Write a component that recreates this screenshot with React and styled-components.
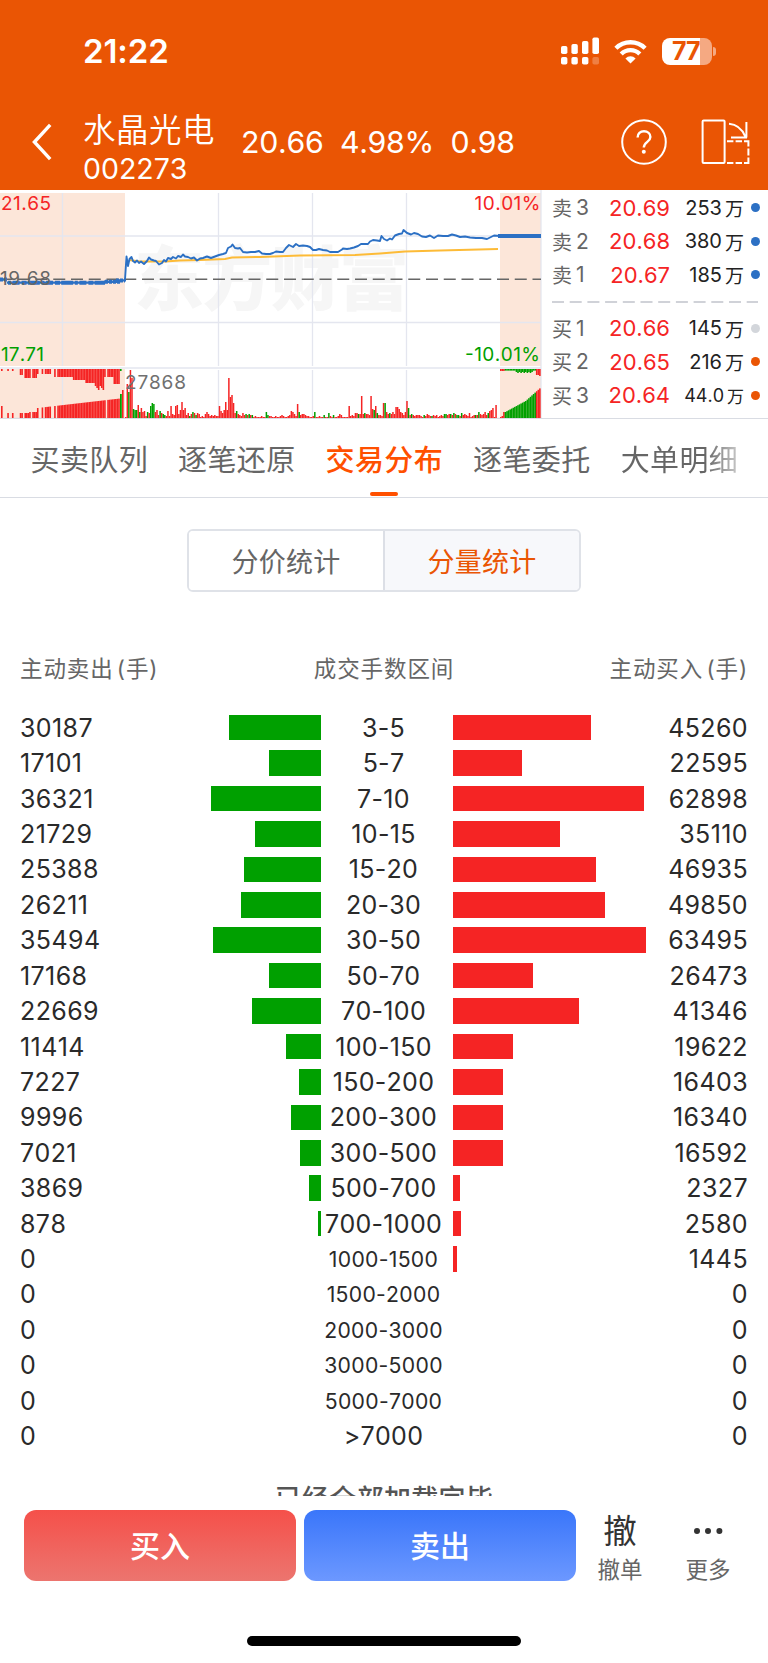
import React, { useState } from 'react';
import styled, { createGlobalStyle, css } from 'styled-components';

const RED   = '#f52424';
const GREEN = '#00a000';
const BLUE  = '#2c70c4';
const BRAND = '#ea5504';
const GRAY  = '#666666';

/* ---------- data ---------- */

const asks = [
  { label: '卖', level: 3, price: '20.69', volume: '253',  dot: BLUE },
  { label: '卖', level: 2, price: '20.68', volume: '380',  dot: BLUE },
  { label: '卖', level: 1, price: '20.67', volume: '185',  dot: BLUE },
];

const bids = [
  { label: '买', level: 1, price: '20.66', volume: '145',  dot: '#d3d6db' },
  { label: '买', level: 2, price: '20.65', volume: '216',  dot: BRAND },
  { label: '买', level: 3, price: '20.64', volume: '44.0', dot: BRAND, small: true },
];

const tabs = ['买卖队列', '逐笔还原', '交易分布', '逐笔委托', '大单明细'];

// [sell, range, buy]
const ranges = [
  [30187, '3-5',       45260],
  [17101, '5-7',       22595],
  [36321, '7-10',      62898],
  [21729, '10-15',     35110],
  [25388, '15-20',     46935],
  [26211, '20-30',     49850],
  [35494, '30-50',     63495],
  [17168, '50-70',     26473],
  [22669, '70-100',    41346],
  [11414, '100-150',   19622],
  [7227,  '150-200',   16403],
  [9996,  '200-300',   16340],
  [7021,  '300-500',   16592],
  [3869,  '500-700',   2327],
  [878,   '700-1000',  2580],
  [0,     '1000-1500', 1445],
  [0,     '1500-2000', 0],
  [0,     '2000-3000', 0],
  [0,     '3000-5000', 0],
  [0,     '5000-7000', 0],
  [0,     '>7000',     0],
];

const MAX_BAR    = 193;
const MAX_VOLUME = 63495;
const barWidth   = (value) => (value / MAX_VOLUME) * MAX_BAR;

const pricePoints = `125,89.5 126.5,66.5 128,76 129.5,69 131.5,67 133,71 135,72.5 137,70.5 139,73 141,71.5 144,74
147,71 149,67.5 151,69.5 154,70.5 156,71 159,74.5 162,73 164,70 166,71.5 168,68 171,69 173,67 176,68.5 178,66
181,67 183,64.5 185,66.5 188,67 191,68.5 194,67.5 197,70.5 200,68.5 203,68 207,66.5 211,68 215,66.5 219,65
223,64 226,63 228,58 231,56.5 232.5,54.5 235,58 238,58.5 240,58 243,62 247,62.5 251,62 255,62 259,61 262,63.5
266,64 270,64 273,63 276,61.5 280,62 283,62 286,58 289,55 293,57 296,54 299,56 303,55.5 307,56 310,57 313,60
316,60 319,59 323,60 327,60.5 330,62 334,62 338,62 342,59.5 343,58.5 347,59 350,58.5 354,57.5 358,56 361,54
364,54 368,54 370,51.5 373,50 377,50.5 380,51 381.5,46 384,49 387,50.5 390,48.5 392,49.5 395,45.5 399,44
402,43.5 403.5,40 407,43 411,44.5 414,43 418,44 422,46.5 426,47 430,45.5 434,48 438,45.5 443,46 448,46
452,44.5 456,45.5 460,47 465,46.5 470,47.5 476,48 482,48 487,49 491,47 494,45.5 500,46`;

const averagePoints = `129,70 140,71.5 165,71.5 180,70.5 200,70 225,69 232,67.5 260,67 300,65.5 355,65 380,63.5
405,61.5 440,60.5 498,59`;

// one entry per minute, negative = falling (green)
const minuteVolumes = [
  0, 34, -26, 48, 40, -9, -8, -8, 13, -6, 10, 6, 7, 2, -6, 5,
  -12, -15, -14, 6, 8, 3, -7, 5, -4, -3, 2, 7, 2,
  12, 4, 3, 12, 13, 4, 8, 16, 8, 10, 3, 5, -2, 4, -6, 5, -3, 5, 4, 0, 2,
  1, 4, 6, 4, 2, 3, 2, 3, 2, 2, 12, 7, 5, 8, 16, 8, 40, 21, 23, 15, 5,
  -7, 4, 3, 2, 5, 3, -4, 3, -4, 3, -3, 0, 2, 1, 0, 1, 2, 0, 1, -6,
  -3, 2, 2, 1, 0, 2, 1, 0, 2, 3, 2, 1, 0, 2, 3, 7, 6, 4, 2,
  14, -6, 3, 4, 4, 3, 2, 2, 1, 0, 2, -6, 1, 0, 2, 1, 0, -3, 0, 1, -5, 2,
  0, -3, 0, 1, 2, 4, 3, 1, 0, 0, 1, 12, 2, 3, 2, 5, 5, -4, 4, 22, 4, -5, 4,
  4, 3, 22, 9, -8, 12, -5, 3, 3, 2, 15, -15, 6, 4, -5, 4, 6, 4, 11, 11, 9,
  6, 5, 3, 6, 17, -10, 3, -4, 3, 2, 3, 3, 3, 2, 1, -3, 2, 4, 3, 2,
  -2, 3, 2, 3, 1, 2, 3, 2, -4, -4, 3, 4, -4, 3, -5, 4, -3, -3, 2, -5, 3, 4,
  3, 2, 5, 1, 2, 3, -3, 3, -6, 4, 3, 4, 6, 3, -5, 7, 8, 10, 0, 13,
];

// opening auction: matched volume at the bottom, unmatched at the top
const openSlots = [0, 4, 7, 12, 13, 15, 16, 17, 18, 20, 21, 22, 23, 26, 28, 29, 30, 31, 34, 36, 37, 38, 39, 40, 41, 42, 43,
  44, 45, 46, 47, 48, 49, 50, 51, 52, 53, 54, 55, 56, 57, 58, 59, 60, 61, 62, 63, 64, 65, 66, 68, 69, 70, 71, 72, 73, 74, 75];

const openTop = (slot) => {
  if (slot < 12) return 2;
  if (slot < 23) return slot < 15 ? 6 : 9;
  if (slot < 34) return 5;
  if (slot < 46) return 8;
  if (slot < 54) return 11;
  if (slot < 60) return 14;
  if (slot < 66) return 17 + (slot % 3) * 2;
  if (slot < 72) return 8;
  return 15;
};

const openBottom = (slot) => {
  if (slot === 0) return 12;
  if (slot < 18) return 5;
  if (slot < 23) return 6;
  return 10 + (slot - 23) * 0.18;
};

/* ---------- chart ---------- */

const SLOT = 1.5625;

const TimeChart = () => (
  <ChartSvg viewBox="0 0 542 229">
    <rect x="0" y="3" width="125" height="173" fill="#fce6d9" />
    <rect x="500" y="3" width="41" height="173" fill="#fce6d9" />
    <rect x="0" y="179" width="125" height="49" fill="#fce6d9" />
    <rect x="500" y="179" width="41" height="49" fill="#fce6d9" />

    <Watermark x="134" y="115" textLength="275">东方财富</Watermark>

    <g stroke="#e4e6ef" strokeWidth="1.3">
      {[62.5, 218.5, 312.5, 406.5].map((x) => (
        <path key={x} d={`M${x} 3V176M${x} 180V228`} />
      ))}
      <path d="M0 46H541M0 132.5H541M0 178H541M541 0V228" />
    </g>
    <path d="M0 228.4H542" stroke="#d9dce3" strokeWidth="1.2" />

    {openSlots.map((slot) => (
      <g key={slot} fill={RED}>
        <rect x={1 + slot * SLOT} y="179" width="1.6" height={openTop(slot)} />
        <rect x={1 + slot * SLOT} y={228 - openBottom(slot)} width="1.6" height={openBottom(slot)} />
      </g>
    ))}
    <rect x="120" y="179" width="1.6" height="2" fill={GREEN} />
    <rect x="120" y="204" width="1.8" height="24" fill={GREEN} />
    <rect x="122" y="200" width="1.6" height="28" fill={RED} />

    {minuteVolumes.map((volume, i) => {
      const height = Math.max(Math.abs(volume), 1);
      return (
        <rect
          key={i}
          x={125 + i * SLOT}
          y={228 - height}
          width="1.5"
          height={height}
          fill={volume < 0 ? GREEN : RED}
        />
      );
    })}

    {/* closing auction */}
    {Array.from({ length: 26 }, (_, i) => {
      const isRed = i > 22 || i < 3;
      const height = i < 2 ? 1 + i : i < 4 ? 6 : i < 16 ? 6 + (i - 3) * 0.85 : 17 + (i - 16) * 1.4;
      const top = i > 24 ? 7 : i > 22 ? 6 : i > 9 && i < 21 ? 3 + (i % 2) : i < 3 ? 2 : 1.6;
      return (
        <g key={i} fill={isRed ? RED : GREEN}>
          <rect x={500 + i * SLOT} y="179" width="1.6" height={top} />
          <rect x={500 + i * SLOT} y={228 - height} width="1.6" height={height} />
        </g>
      );
    })}

    <path d="M0 89.2H541" stroke="#666" strokeWidth="1.6" strokeDasharray="12 5.75" />
    <polyline points={averagePoints} fill="none" stroke="#fdbb37" strokeWidth="2" />
    <polyline points={pricePoints} fill="none" stroke={BLUE} strokeWidth="1.9" strokeLinejoin="round" />
    <path d="M0 89.6H7M7 92.6H105M104 91.8H120M116 90.4H126" stroke={BLUE} strokeWidth="2.4" />
    <path d="M8 92.8H105" stroke={BLUE} strokeWidth="4" strokeDasharray="3 1.6 7 2 5 1.2 12 1.6" />
    <path d="M0 89.6H7M105 91.8H120M116 90.4H125" stroke={BLUE} strokeWidth="4" strokeDasharray="3 1" />
    <path d="M498 46H541" stroke={BLUE} strokeWidth="3.8" />

    <ChartText x="1"   y="19.5"  fill={RED}     textLength="50">21.65</ChartText>
    <ChartText x="0"   y="95"    fill="#666"    textLength="51">19.68</ChartText>
    <ChartText x="1"   y="170.5" fill={GREEN}   textLength="43">17.71</ChartText>
    <ChartText x="474.5" y="19.5"  fill={RED}     textLength="66">10.01%</ChartText>
    <ChartText x="465" y="170.5" fill={GREEN}   textLength="75">-10.01%</ChartText>
    <ChartText x="125" y="199"   fill="#707070" textLength="61">27868</ChartText>
  </ChartSvg>
);

/* ---------- icons ---------- */

const SignalIcon = () => (
  <svg width="40" height="28" viewBox="0 0 40 28" fill="#fff">
    <rect x="1"    y="9" width="6.4" height="8"   rx="1.8" />
    <rect x="11.4" y="7" width="6.4" height="10"  rx="1.8" />
    <rect x="22"   y="4" width="6.4" height="13"  rx="1.8" />
    <rect x="32.4" y="0.5" width="6.6" height="16.5" rx="1.8" />
    <rect x="1"    y="20" width="6.4" height="7.5" rx="1.8" />
    <rect x="11.4" y="20" width="6.4" height="7.5" rx="1.8" />
    <rect x="22"   y="20" width="6.4" height="7.5" rx="1.8" />
    <rect x="32.4" y="20" width="6.6" height="7.5" rx="1.8" opacity="0.25" />
  </svg>
);

const WifiIcon = () => (
  <svg width="33" height="25" viewBox="0 0 33 25" fill="none" stroke="#fff" strokeWidth="4.4">
    <path d="M1.9 9.2A20.8 20.8 0 0 1 31.1 9.2" />
    <path d="M7.2 15A13.1 13.1 0 0 1 25.8 15" />
    <path d="M16.5 24.4L11.4 19.4A7.4 7.4 0 0 1 21.6 19.4Z" fill="#fff" stroke="none" />
  </svg>
);

const BackIcon = () => (
  <svg width="20" height="38" viewBox="0 0 20 38" fill="none" stroke="#fff" strokeWidth="3.4">
    <path d="M18.2 1.8L2.4 19L18.2 36.2" />
  </svg>
);

const HelpIcon = () => (
  <svg width="46" height="46" viewBox="0 0 46 46" fill="none" stroke="#fff" strokeWidth="2">
    <circle cx="23" cy="23" r="21.8" />
    <path d="M16.6 18.4C16.6 14.6 19.3 12.2 23 12.2C26.6 12.2 29.4 14.6 29.4 18C29.4 23 22.8 22.8 22.8 28.6" strokeWidth="2.4" />
    <circle cx="22.8" cy="32.8" r="2" fill="#fff" stroke="none" />
  </svg>
);

const RotateIcon = () => (
  <svg width="49" height="46" viewBox="0 0 49 46" fill="none" stroke="#fff" strokeWidth="2">
    <rect x="1.6" y="1.6" width="22" height="42.4" rx="1" />
    <path d="M28 4.8C36 5.4 41 10 44.2 17.4M45.4 3V18.4M30 18.4H46" />
    <path d="M26 22.2H32.4M34.6 22.2H41M43 22.2H47.4V27.4M47.4 29.6V36.4M47.4 38.6V44H43M41 44H34.6M32.4 44H26" />
  </svg>
);

/* ---------- parts ---------- */

const QuoteLine = ({ quote }) => (
  <QuoteRow>
    <QuoteLabel>{quote.label}<span>{quote.level}</span></QuoteLabel>
    <QuotePrice>{quote.price}</QuotePrice>
    <QuoteVolume $small={quote.small}>{quote.volume}<span>万</span></QuoteVolume>
    <Dot $color={quote.dot} />
  </QuoteRow>
);

const rangeSize = (range) => (range.length > 8 ? 21.2 : 25);

export default function App() {
  const [activeTab, setActiveTab] = useState('交易分布');
  const [mode, setMode]           = useState('分量统计');

  return (
    <Screen>
      <GlobalStyle />

      <Top>
        <StatusBar>
          <Clock>21:22</Clock>
          <StatusIcons>
            <SignalIcon />
            <WifiIcon />
            <Battery><BatteryBody>77</BatteryBody><BatteryTip /></Battery>
          </StatusIcons>
        </StatusBar>
        <StockBar>
          <BackIcon />
          <StockName>
            <Name>水晶光电</Name>
            <Code>002273</Code>
          </StockName>
          <Quote><span>20.66</span><span>4.98%</span><span>0.98</span></Quote>
          <StockTools><HelpIcon /><RotateIcon /></StockTools>
        </StockBar>
      </Top>

      <Market>
        <TimeChart />
        <OrderBook>
          {asks.map((quote) => <QuoteLine key={quote.price} quote={quote} />)}
          <BookDivider viewBox="0 0 206 20"><path d="M0 10H206" /></BookDivider>
          {bids.map((quote) => <QuoteLine key={quote.price} quote={quote} />)}
        </OrderBook>
      </Market>

      <TabList>
        {tabs.map((tab) => (
          <Tab key={tab} $active={tab === activeTab} onClick={() => setActiveTab(tab)}>{tab}</Tab>
        ))}
      </TabList>

      <Segment>
        {['分价统计', '分量统计'].map((item) => (
          <SegmentItem key={item} $active={item === mode} onClick={() => setMode(item)}>{item}</SegmentItem>
        ))}
      </Segment>

      <TableHead>
        <span>主动卖出 (手)</span>
        <span>成交手数区间</span>
        <span>主动买入 (手)</span>
      </TableHead>
      <Table>
        {ranges.map(([sell, range, buy]) => (
          <Row key={range}>
            <Amount>{sell}</Amount>
            <BarCell $side="sell"><Bar $color={GREEN} style={{ width: barWidth(sell) }} /></BarCell>
            <Range $size={rangeSize(range)}>{range}</Range>
            <BarCell><Bar $color={RED} style={{ width: barWidth(buy) }} /></BarCell>
            <Amount $right>{buy}</Amount>
          </Row>
        ))}
      </Table>
      <LoadedTip>已经全部加载完毕</LoadedTip>

      <ActionBar>
        <TradeButton $from="#f5504a" $to="#ec756f">买入</TradeButton>
        <TradeButton $from="#3a76fa" $to="#6c98ff">卖出</TradeButton>
        <Action>
          <ActionIcon>撤</ActionIcon>
          <span>撤单</span>
        </Action>
        <Action>
          <ActionIcon>
            <svg width="30" height="8" viewBox="0 0 30 8" fill="#333">
              <circle cx="4" cy="4" r="3" /><circle cx="15" cy="4" r="3" /><circle cx="26.4" cy="4" r="3" />
            </svg>
          </ActionIcon>
          <span>更多</span>
        </Action>
      </ActionBar>
      <HomeIndicator />
    </Screen>
  );
}

/* ---------- styles ---------- */

const GlobalStyle = createGlobalStyle`
  * { box-sizing: border-box; }
  body {
    margin      : 0;
    background  : #fff;
    font-family : Inter, "Noto Sans CJK SC", sans-serif;
    font-kerning: none;
  }
  svg { display: block; flex: none; }
  button {
    border     : 0;
    padding    : 0;
    background : none;
    font-family: inherit;
    color      : inherit;
  }
`;

const Screen = styled.div`
  display       : flex;
  flex-direction: column;
  width         : 768px;
  height        : 1663px;
  overflow      : hidden;
  background    : #fff;
`;

const Top = styled.header`
  flex      : none;
  height    : 190px;
  color     : #fff;
  background: ${BRAND};
`;

const StatusBar = styled.div`
  display        : flex;
  justify-content: space-between;
  height         : 102px;
  padding        : 0 52px 0 83px;
`;

const Clock = styled.div`
  font-size     : 33px;
  font-weight   : 600;
  line-height   : 103px;
  letter-spacing: -0.1px;
`;

const StatusIcons = styled.div`
  display    : flex;
  align-items: center;
  gap        : 14.5px;
`;

const Battery = styled.div`
  display    : flex;
  align-items: center;
  gap        : 1.5px;
`;

const BatteryBody = styled.div`
  width         : 50px;
  height        : 27px;
  border-radius : 8px;
  padding-right : 1px;
  font-size     : 25px;
  font-weight   : 700;
  line-height   : 27px;
  letter-spacing: -0.5px;
  text-align    : center;
  color         : ${BRAND};
  background    : linear-gradient(90deg, #fff 38px, #f5a982 38px);
`;

const BatteryTip = styled.div`
  width        : 3px;
  height       : 9px;
  border-radius: 0 4px 4px 0;
  background   : #f5a982;
`;

const StockBar = styled.div`
  display    : flex;
  align-items: center;
  height     : 80px;
  padding    : 0 18px 0 32px;
`;

const StockName = styled.div`
  width      : 158px;
  margin-left: 31px;
`;

const Name = styled.div`
  font-size     : 32.5px;
  line-height   : 38px;
  letter-spacing: 0.5px;
  font-weight   : 350;
  padding-top   : 15px;
`;

const Code = styled.div`
  font-size     : 28.5px;
  line-height   : 38px;
`;

const Quote = styled.div`
  display       : flex;
  gap           : 16.5px;
  font-size     : 30.3px;
  line-height   : 40px;
  letter-spacing: -0.3px;
`;

const StockTools = styled.div`
  display    : flex;
  align-items: center;
  gap        : 34px;
  margin-left: auto;
`;

const Market = styled.section`
  display: flex;
  flex   : none;
  height : 229px;
`;

const ChartSvg = styled.svg`
  width : 542px;
  height: 229px;
`;

const ChartText = styled.text`
  font-size: 19px;
`;

const Watermark = styled.text`
  font-size  : 70px;
  font-weight: 900;
  fill       : #f6f6f6;
`;

const OrderBook = styled.div`
  flex         : 1;
  padding      : 1px 8px 0 10px;
  border-bottom: 1px solid #d9dce3;
`;

const QuoteRow = styled.div`
  display    : flex;
  align-items: center;
  height     : 33.5px;
`;

const QuoteLabel = styled.div`
  display    : flex;
  align-items: center;
  gap        : 4px;
  width      : 48px;
  font-size  : 20px;
  color      : ${GRAY};

  span { font-size: 21px; }
`;

const QuotePrice = styled.div`
  width     : 70px;
  font-size : 22px;
  text-align: right;
  color     : ${RED};
`;

const QuoteVolume = styled.div`
  display        : flex;
  align-items    : center;
  justify-content: flex-end;
  gap            : 3px;
  width          : 74px;
  font-size      : ${(props) => (props.$small ? '18px' : '20px')};
  color          : #222;

  span { font-size: ${(props) => (props.$small ? '17px' : '19px')}; }
`;

const Dot = styled.i`
  width        : 9px;
  height       : 9px;
  margin-left  : auto;
  border-radius: 50%;
  background   : ${(props) => props.$color};
`;

const BookDivider = styled.svg`
  width       : 206px;
  height      : 20px;
  stroke      : #d0d2d8;
  stroke-width: 2;
  stroke-dasharray: 12 5.7;
`;

const TabList = styled.nav`
  display      : flex;
  flex         : none;
  gap          : 30px;
  height       : 79px;
  padding-left : 30.5px;
  border-bottom: 1px solid #d9dce3;
  overflow     : hidden;
`;

const Tab = styled.button`
  display       : flex;
  flex          : none;
  flex-direction: column;
  align-items   : center;
  font-size     : 29px;
  line-height   : 84px;
  letter-spacing: 0.38px;
  color         : ${GRAY};

  &:last-child {
    color          : transparent;
    background     : linear-gradient(90deg, ${GRAY} 72%, #c8c8c8 100%);
    background-clip: text;
  }

  ${(props) =>
    props.$active &&
    css`
      font-weight: 500;
      color      : #ff5000;

      &::after {
        content      : '';
        width        : 28px;
        height       : 4px;
        margin-top   : -11px;
        border-radius: 2px;
        background   : #ff5000;
      }
    `
  }
`;

const Segment = styled.div`
  display      : flex;
  flex         : none;
  width        : 394px;
  height       : 63px;
  margin       : 31px auto 0;
  border       : 2px solid #dfe2e8;
  border-radius: 6px;
  overflow     : hidden;
`;

const SegmentItem = styled.button`
  flex          : 1;
  font-size     : 27px;
  letter-spacing: 0.2px;
  color         : ${(props) => (props.$active ? BRAND : GRAY)};
  background    : ${(props) => (props.$active ? '#f7f8fb' : '#fff')};

  & + & { border-left: 2px solid #dcdfe6; }
`;

const TableHead = styled.div`
  display        : flex;
  justify-content: space-between;
  flex           : none;
  padding        : 0 20px;
  margin-top     : 61px;
  font-size      : 22.5px;
  line-height    : 32px;
  letter-spacing : 0.9px;
  word-spacing   : -4px;
  color          : ${GRAY};
`;

const Table = styled.div`
  flex      : none;
  margin-top: 25px;
`;

const Row = styled.div`
  display    : flex;
  align-items: center;
  height     : 35.43px;
  padding    : 0 20px;
`;

const Amount = styled.div`
  width         : 100px;
  font-size     : 25px;
  letter-spacing: 0.4px;
  text-align    : ${(props) => (props.$right ? 'right' : 'left')};
  color         : #2a2a2a;
`;

const BarCell = styled.div`
  display        : flex;
  width          : ${(props) => (props.$side === 'sell' ? '201px' : '195px')};
  justify-content: ${(props) => (props.$side === 'sell' ? 'flex-end' : 'flex-start')};
`;

const Bar = styled.div`
  height    : 25.5px;
  background: ${(props) => props.$color};
`;

const Range = styled.div`
  display        : flex;
  justify-content: center;
  width          : 132px;
  padding-right  : 7px;
  font-size      : ${(props) => props.$size}px;
  letter-spacing : 0.3px;
  white-space    : nowrap;
  color          : #2a2a2a;
`;

const LoadedTip = styled.div`
  flex          : none;
  height        : 19px;
  margin-top    : 23px;
  font-size     : 27px;
  font-weight   : 500;
  line-height   : 46px;
  text-align    : center;
  letter-spacing: 0.3px;
  color         : #555;
  overflow      : hidden;
`;

const ActionBar = styled.div`
  display    : flex;
  flex       : none;
  height     : 71px;
  margin-top : 14px;
  padding    : 0 16px 0 24px;
`;

const TradeButton = styled.button`
  width         : 272px;
  margin-right  : 8px;
  border-radius : 12px;
  padding-bottom: 2px;
  font-size     : 30px;
  font-weight   : 500;
  color         : #fff;
  background    : linear-gradient(180deg, ${(props) => props.$from}, ${(props) => props.$to});

  & + & { margin-right: 0; }
`;

const Action = styled.button`
  display       : flex;
  flex          : 1;
  flex-direction: column;
  align-items   : center;
  font-size     : 22.5px;
  line-height   : 28px;
  color         : ${GRAY};
`;

const ActionIcon = styled.div`
  display      : flex;
  align-items  : center;
  flex         : none;
  height       : 42px;
  margin-bottom: 4px;
  font-size    : 33.5px;
  line-height  : 42px;
  color        : #333;
`;

const HomeIndicator = styled.div`
  flex         : none;
  width        : 274px;
  height       : 10px;
  margin       : 55px auto 0;
  border-radius: 5px;
  background   : #000;
`;
